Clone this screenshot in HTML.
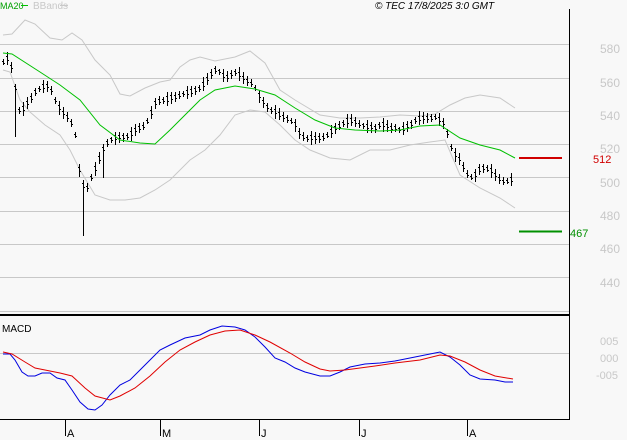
<!DOCTYPE html>
<html><head><meta charset="utf-8"><style>
html,body{margin:0;padding:0;background:#f8f8f8;}
svg{display:block;font-family:"Liberation Sans",sans-serif;}
</style></head><body>
<svg id="s" width="627" height="440" viewBox="0 0 627 440" xmlns="http://www.w3.org/2000/svg">
<rect width="627" height="440" fill="#f8f8f8"/>
<g stroke="#c8c8c8" stroke-width="1">
<line x1="0" y1="44.5" x2="569" y2="44.5"/>
<line x1="0" y1="78.5" x2="569" y2="78.5"/>
<line x1="0" y1="111.5" x2="569" y2="111.5"/>
<line x1="0" y1="144.5" x2="569" y2="144.5"/>
<line x1="0" y1="177.5" x2="569" y2="177.5"/>
<line x1="0" y1="211.5" x2="569" y2="211.5"/>
<line x1="0" y1="244.5" x2="569" y2="244.5"/>
<line x1="0" y1="277.5" x2="569" y2="277.5"/>
<line x1="0" y1="311.5" x2="569" y2="311.5"/>
<line x1="0" y1="353.5" x2="569" y2="353.5"/>
</g>
<g fill="#c8c8c8" font-size="12">
<text x="600" y="53">580</text><text x="600" y="87">560</text><text x="600" y="120">540</text>
<text x="600" y="153">520</text><text x="600" y="187">500</text><text x="600" y="220">480</text>
<text x="600" y="253">460</text><text x="600" y="287">440</text>
<text x="600" y="345" font-size="11">005</text><text x="600" y="362" font-size="11">000</text><text x="596" y="379" font-size="11">-005</text>
</g>
<line x1="569.5" y1="9" x2="569.5" y2="419" stroke="#000"/>
<line x1="0" y1="315" x2="569" y2="315" stroke="#000" stroke-width="2"/>
<line x1="0" y1="419.5" x2="570" y2="419.5" stroke="#000"/>
<g stroke="#000"><line x1="65.5" y1="419" x2="65.5" y2="436"/><line x1="160.5" y1="419" x2="160.5" y2="436"/><line x1="259.5" y1="419" x2="259.5" y2="436"/><line x1="359.5" y1="419" x2="359.5" y2="436"/><line x1="467.5" y1="419" x2="467.5" y2="436"/></g>
<g font-size="11" fill="#000"><text x="67" y="437">A</text><text x="162" y="437">M</text><text x="261" y="437">J</text><text x="361" y="437">J</text><text x="469" y="437">A</text>
<text x="2" y="332" font-size="10">MACD</text></g>
<text x="0" y="9" font-size="9" fill="#00a000">MA20</text><line x1="21" y1="5.5" x2="28" y2="5.5" stroke="#00c000"/>
<text x="33" y="9" font-size="10" fill="#c8c8c8">BBands</text><line x1="60" y1="5.5" x2="68" y2="5.5" stroke="#c8c8c8"/>
<text x="375" y="9" font-size="10" font-style="italic" fill="#000">© TEC 17/8/2025 3:0 GMT</text>
<g id="bb" fill="none" stroke="#c8c8c8"></g>
<g id="bars" stroke="#000"></g>
<g id="ma" fill="none" stroke="#00c000"></g>
<line x1="519" y1="158" x2="562" y2="158" stroke="#d00000" stroke-width="2"/>
<text x="593" y="163" font-size="11" fill="#d00000">512</text>
<line x1="519" y1="231.5" x2="562" y2="231.5" stroke="#009000" stroke-width="2"/>
<text x="570" y="237" font-size="11" fill="#009000">467</text>
<g id="mc" fill="none"></g>
</svg>
<script>
var NS="http://www.w3.org/2000/svg";
function pl(g,pts,col){var p=document.createElementNS(NS,"polyline");p.setAttribute("points",pts.map(function(a){return a.join(",")}).join(" "));if(col)p.setAttribute("stroke",col);document.getElementById(g).appendChild(p);}
pl("bb",[[3,35],[12,34],[25,20],[35,24],[50,38],[62,40],[72,33],[82,40],[95,60],[110,75],[120,94],[130,96],[145,88],[160,82],[170,80],[180,67],[190,60],[200,57],[215,61],[235,57],[250,51],[265,63],[280,90],[295,100],[320,115],[340,118],[360,118],[380,117],[400,115],[420,116],[435,114],[450,105],[465,98],[480,95],[500,98],[515,108]]);
pl("bb",[[3,70],[10,72],[20,100],[30,112],[45,125],[60,135],[70,150],[80,170],[95,195],[110,200],[125,200],[140,198],[155,190],[170,180],[190,160],[205,150],[220,135],[235,115],[250,110],[265,112],[280,125],[295,140],[310,150],[330,158],[350,160],[370,150],[390,150],[410,145],[430,142],[445,140],[460,175],[480,188],[500,198],[515,208]]);
pl("ma",[[3,53],[12,54],[40,72],[60,85],[80,100],[100,125],[120,140],[140,143],[155,144],[170,130],[185,115],[200,100],[215,90],[235,86],[255,89],[275,95],[295,108],[315,120],[335,128],[355,130],[380,131],[400,130],[420,126],[440,125],[460,138],[480,145],[500,150],[515,158]]);
pl("mc",[[3,354],[10,354],[15,360],[22,372],[28,376],[35,376],[42,373],[50,373],[57,378],[65,380],[72,390],[80,402],[88,409],[95,410],[102,405],[110,395],[120,385],[130,380],[140,370],[150,360],[160,350],[170,345],[185,338],[200,335],[210,330],[222,326],[235,327],[245,330],[255,337],[265,347],[275,358],[285,362],[295,368],[305,372],[320,376],[330,376],[340,372],[350,367],[365,364],[380,363],[395,361],[410,358],[425,355],[440,352],[450,357],[460,365],[470,375],[480,379],[495,380],[505,382],[513,382]],"#0000e0");
pl("mc",[[3,352],[12,354],[25,362],[35,368],[45,370],[60,373],[72,376],[85,388],[95,396],[110,400],[120,396],[135,388],[150,376],[165,362],[180,350],[195,342],[210,335],[225,331],[240,330],[255,335],[270,342],[290,353],[305,362],[320,369],[330,371],[345,370],[360,368],[375,366],[395,363],[420,360],[440,355],[450,356],[465,362],[480,370],[495,376],[513,379]],"#e00000");
var k=[[3,62],[8,58],[12,70],[17,100],[20,115],[25,105],[30,100],[35,92],[40,88],[45,85],[50,88],[55,100],[60,110],[65,115],[70,120],[75,135],[78,160],[82,200],[88,185],[92,175],[97,165],[100,155],[105,145],[110,140],[115,138],[120,137],[125,137],[130,135],[135,130],[140,128],[145,125],[150,115],[155,103],[160,100],[165,100],[170,98],[175,97],[180,95],[185,93],[190,92],[195,90],[200,88],[205,82],[210,75],[215,70],[220,72],[225,78],[230,75],[235,72],[240,75],[245,80],[250,82],[255,88],[260,98],[265,105],[270,110],[275,112],[280,115],[285,118],[290,120],[295,125],[300,135],[305,138],[310,138],[315,138],[320,138],[325,137],[330,132],[335,128],[340,125],[345,122],[350,120],[355,122],[360,125],[365,126],[370,127],[375,128],[380,125],[385,125],[390,128],[395,128],[400,130],[405,127],[410,125],[415,120],[420,118],[425,118],[430,118],[435,117],[440,120],[445,125],[450,145],[455,155],[460,160],[465,172],[470,178],[475,175],[480,168],[485,168],[490,170],[495,175],[500,180],[505,182],[510,180],[513,178]];
function iy(x){for(var i=0;i<k.length-1;i++){if(x<=k[i+1][0]){var t=(x-k[i][0])/(k[i+1][0]-k[i][0]);return k[i][1]+t*(k[i+1][1]-k[i][1]);}}return k[k.length-1][1];}
var g=document.getElementById("bars"),s="";
for(var x=3,n=0;x<=513;x+=4,n++){var y=iy(x);var h=6+((n*7)%9);var y1=y-h/2,y2=y+h/2;
if(x==15||x==17){y2=137;}if(x==83){y2=236;y1=180;}if(x==103){y2=178;}
var X=x+0.5;s+="M"+X+" "+y1.toFixed(0)+"V"+y2.toFixed(0)+"M"+(X-1.5)+" "+(y1+h*0.3).toFixed(0)+".5h1.5M"+X+" "+(y1+h*0.6).toFixed(0)+".5h1.5";}
var p=document.createElementNS(NS,"path");p.setAttribute("d",s);g.appendChild(p);
</script>
</body></html>
